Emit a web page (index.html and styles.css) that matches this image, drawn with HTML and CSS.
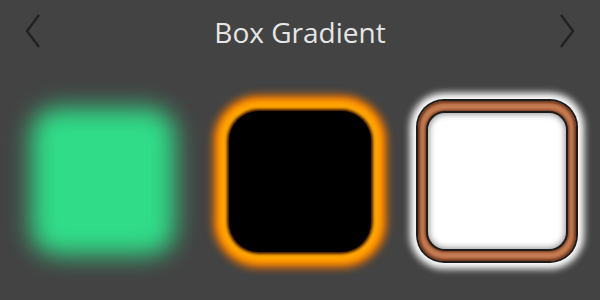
FILE: index.html
```html
<!DOCTYPE html>
<html>
<head>
<meta charset="utf-8">
<link rel="stylesheet" href="styles.css">
</head>
<body>
<div class="app">
  <header class="bar">
    <svg class="chev" width="16" height="34" viewBox="0 0 16 34"><polyline points="14,1 2,17 14,33" fill="none" stroke="#222" stroke-width="2.4"/></svg>
    <div class="title">Box Gradient</div>
    <svg class="chev" width="16" height="34" viewBox="0 0 16 34"><polyline points="2,1 14,17 2,33" fill="none" stroke="#222" stroke-width="2.4"/></svg>
  </header>
  <main class="row">
    <div class="cell"><div class="green"></div></div>
    <div class="cell"><div class="orange"></div></div>
    <div class="cell">
      <div class="copper"><div class="white"></div></div>
    </div>
  </main>
</div>
</body>
</html>
```
FILE: styles.css
```css
html, body {
  margin: 0;
  padding: 0;
  background: #434343;
}
.app {
  width: 600px;
  height: 300px;
  overflow: hidden;
  display: flex;
  flex-direction: column;
}
.bar {
  height: 62px;
  display: flex;
  align-items: center;
  justify-content: space-between;
  padding: 0 25px 0 25px;
  box-sizing: border-box;
}
.chev {
  display: block;
}
.title {
  flex: 1;
  text-align: center;
  font-family: "Open Sans", "Noto Sans", sans-serif;
  font-size: 28px;
  color: #e6e6e6;
  line-height: 1;
  padding-top: 1px;
}
.row {
  flex: 1;
  display: grid;
  grid-template-columns: 197px 197px 197px;
  justify-content: center;
  align-items: center;
}
.cell {
  display: flex;
  justify-content: center;
  align-items: center;
}
.green {
  width: 144px;
  height: 147px;
  border-radius: 26px;
  background: #30dc88;
  filter: blur(12px);
}
.orange {
  width: 142px;
  height: 141px;
  border-radius: 30px;
  background: #000;
  box-shadow:
    0 0 3px 2px #3a1200,
    0 0 5px 7px #ffaa00,
    0 0 5px 12px #ff9600,
    0 0 7px 17px #c86a10;
}
.copper {
  width: 158px;
  height: 160px;
  border-radius: 26px;
  background: #c67c52;
  box-sizing: border-box;
  display: flex;
  justify-content: center;
  align-items: center;
  box-shadow:
    inset 0 0 3px 2px #6a3218,
    0 0 0 2px #1c1c1c,
    0 0 7px 8px #ffffff;
}
.white {
  width: 138px;
  height: 136px;
  border-radius: 17px;
  background: #fff;
  box-shadow:
    0 0 0 2px #1c1c1c,
    0 0 3px 3px #6a3218,
    inset 0 0 6px 1px rgba(0,0,0,0.45);
}
```
